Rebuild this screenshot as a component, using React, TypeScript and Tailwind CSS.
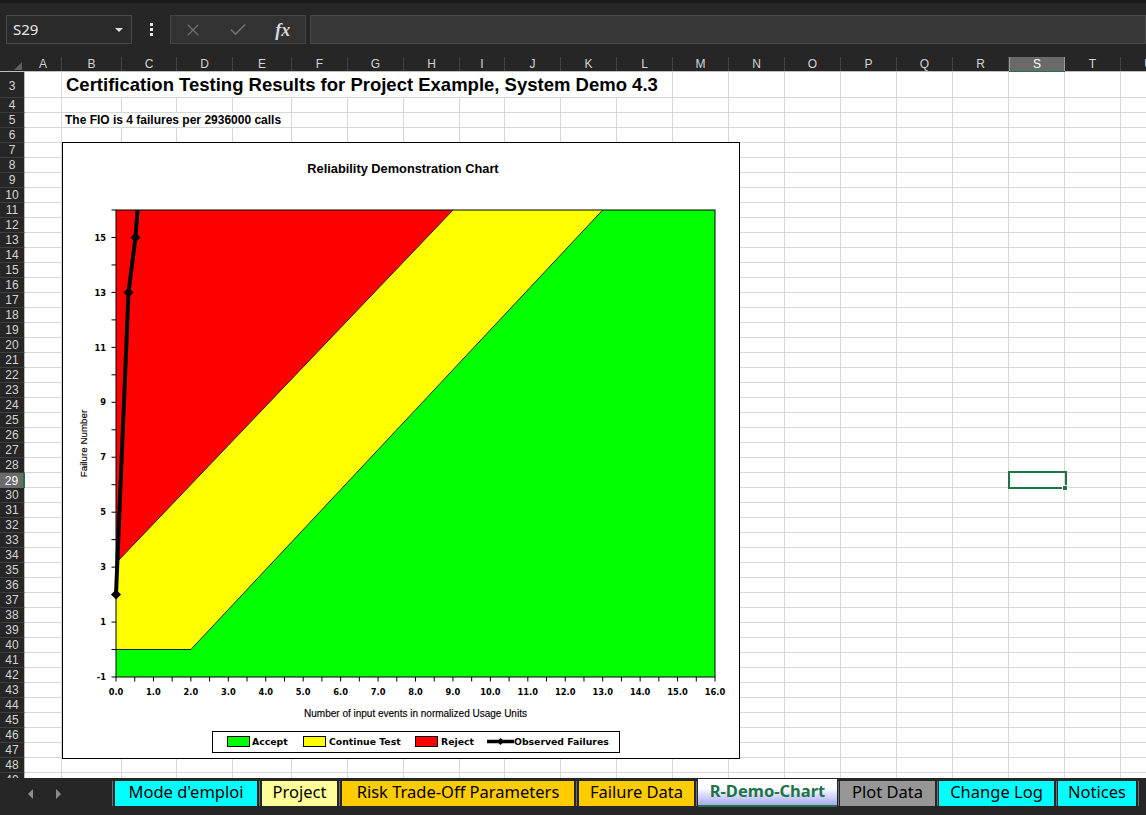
import { X, Check } from "lucide-react";

const GRID =
  "grid grid-cols-[37px_60px_55px_56px_59px_56px_56px_56px_45px_56px_56px_56px_56px_56px_56px_56px_56px_56px_56px_56px_56px]";
const COLS = ["A","B","C","D","E","F","G","H","I","J","K","L","M","N","O","P","Q","R","S","T","U"];
const ROWS: number[] = [];
for (let r = 3; r <= 49; r++) ROWS.push(r);

const px = (x: number) => 54 + x * (599 / 16);
const py = (v: number) => 535 - (v + 1) * (467 / 17);

function Diamond({ x, y, s = 5 }: { x: number; y: number; s?: number }) {
  return <polygon points={`${x},${y - s} ${x + s},${y} ${x},${y + s} ${x - s},${y}`} fill="#000" />;
}

function Chart() {
  const xt: number[] = [];
  for (let i = 0; i <= 32; i++) xt.push(i * 0.5);
  const yt: number[] = [];
  for (let v = -1; v <= 16; v++) yt.push(v);
  const axisFont = { fontFamily: "'DejaVu Sans', sans-serif", fontWeight: 700 } as const;
  const obs = [
    [54, py(2)],
    [66.5, py(13)],
    [73.5, py(15)],
    [75.5, 68],
  ];
  return (
    <svg width={678} height={617} className="block">
      <rect x={0.5} y={0.5} width={677} height={616} fill="#fff" stroke="#000" strokeWidth={1} />
      <text x={341} y={30.5} textAnchor="middle" fontFamily="'Liberation Sans', Arial, sans-serif" fontWeight={700} fontSize={12.8} fill="#000">
        Reliability Demonstration Chart
      </text>
      <polygon points={`54,507.5 128.9,507.5 540.7,68 653,68 653,535 54,535`} fill="#00ff00" />
      <polygon points={`54,421 391,68 540.7,68 128.9,507.5 54,507.5`} fill="#ffff00" />
      <polygon points={`54,68 391,68 54,421`} fill="#ff0000" />
      <polyline points={`54,421 391,68`} fill="none" stroke="#222" strokeWidth={1} />
      <polyline points={`54,507.5 128.9,507.5 540.7,68`} fill="none" stroke="#222" strokeWidth={1} />
      <polyline points={obs.map((p) => p.join(",")).join(" ")} fill="none" stroke="#000" strokeWidth={4} />
      <Diamond x={54} y={py(2)} />
      <Diamond x={66.5} y={py(13)} />
      <Diamond x={73.5} y={py(15)} />
      <rect x={54} y={68} width={599} height={467} fill="none" stroke="#000" strokeWidth={1} />
      {yt.map((v) => (
        <line key={"yt" + v} x1={49.5} x2={54} y1={py(v)} y2={py(v)} stroke="#000" strokeWidth={1} />
      ))}
      {yt
        .filter((v) => Math.abs(v % 2) === 1)
        .map((v) => (
          <text key={"yl" + v} x={44} y={py(v) + 3.2} textAnchor="end" fontSize={8.3} fill="#000" style={axisFont}>
            {v}
          </text>
        ))}
      {xt.map((x) => (
        <line key={"xt" + x} x1={px(x)} x2={px(x)} y1={535} y2={539.5} stroke="#000" strokeWidth={1} />
      ))}
      {xt
        .filter((x) => Number.isInteger(x))
        .map((x) => (
          <text key={"xl" + x} x={px(x)} y={552.5} textAnchor="middle" fontSize={8.3} fill="#000" style={axisFont}>
            {x}.0
          </text>
        ))}
      <text x={353.5} y={574.5} textAnchor="middle" fontFamily="'Liberation Sans', Arial, sans-serif" fontSize={10} fill="#000" stroke="#000" strokeWidth={0.15}>
        Number of input events in normalized Usage Units
      </text>
      <text
        x={24.5}
        y={301.5}
        textAnchor="middle"
        transform="rotate(-90 24.5 301.5)"
        fontFamily="'Liberation Sans', Arial, sans-serif"
        fontSize={9.8}
        fill="#000"
        stroke="#000"
        strokeWidth={0.15}
      >
        Failure Number
      </text>
      <rect x={150.5} y={589.5} width={407} height={21} fill="#fff" stroke="#000" strokeWidth={1} />
      <rect x={165.5} y={594.5} width={22} height={10} fill="#00ff00" stroke="#000" strokeWidth={1} />
      <text x={190} y={603} fontSize={9.3} fill="#000" style={axisFont}>Accept</text>
      <rect x={241.5} y={594.5} width={22} height={10} fill="#ffff00" stroke="#000" strokeWidth={1} />
      <text x={267} y={603} fontSize={9.3} fill="#000" style={axisFont}>Continue Test</text>
      <rect x={353.5} y={594.5} width={22} height={10} fill="#ff0000" stroke="#000" strokeWidth={1} />
      <text x={379} y={603} fontSize={9.3} fill="#000" style={axisFont}>Reject</text>
      <line x1={425} x2={452} y1={599.5} y2={599.5} stroke="#000" strokeWidth={3.5} />
      <Diamond x={438.5} y={599.5} s={3.5} />
      <text x={452} y={603} fontSize={9.3} fill="#000" style={axisFont}>Observed Failures</text>
    </svg>
  );
}

function Sep({ w }: { w: string }) {
  return (
    <div className={w + " h-[25px] flex justify-center"}>
      <div className="w-px h-full bg-[#6e6e6e]" />
    </div>
  );
}

function Tab({ label, cls }: { label: string; cls: string }) {
  return (
    <div className={cls + " h-[25px] pb-[2px] flex items-center justify-center text-[16.5px] text-black font-['Noto_Sans',sans-serif] leading-none"}>
      {label}
    </div>
  );
}

export default function App() {
  return (
    <div className="w-[1146px] h-[815px] overflow-hidden bg-[#262626] flex flex-col font-['Liberation_Sans',Arial,sans-serif]">
      <div className="h-[3px] shrink-0 bg-[#1b1b1b]" />
      <div className="h-[54px] shrink-0 flex items-start pt-[12px]">
        <div className="ml-[6px] w-[126px] h-[29px] bg-[#2a2a2a] border border-[#4a4a4a] flex items-center justify-between pl-[6px] pr-[8px] text-[#e8e8e8] text-[15px] font-['Noto_Sans',sans-serif]">
          <span>S29</span>
          <span className="w-0 h-0 border-l-[4px] border-r-[4px] border-t-[4px] border-l-transparent border-r-transparent border-t-[#e0e0e0]" />
        </div>
        <div className="w-[38px] h-[29px] flex flex-col items-center justify-center gap-[2px]">
          <div className="w-[3px] h-[3px] bg-[#e6e6e6]" />
          <div className="w-[3px] h-[3px] bg-[#e6e6e6]" />
          <div className="w-[3px] h-[3px] bg-[#e6e6e6]" />
        </div>
        <div className="w-[136px] h-[29px] bg-[#323232] border border-[#444] grid grid-cols-3 items-center justify-items-center">
          <X size={20} strokeWidth={1.4} color="#6f6f6f" />
          <Check size={20} strokeWidth={2} color="#6f6f6f" />
          <span className="text-[18px] italic font-semibold font-['Liberation_Serif',serif] text-[#d8d8d8] leading-none">fx</span>
        </div>
        <div className="ml-[4px] flex-1 h-[29px] bg-[#383838] border border-[#4a4a4a]" />
      </div>
      <div className="h-[14px] shrink-0 flex overflow-hidden">
        <div className="w-[25px] shrink-0 flex items-end justify-end pr-[3px] pb-[1px]">
          <div className="w-0 h-0 border-l-[8px] border-l-transparent border-b-[8px] border-b-[#606060]" />
        </div>
        <div className={GRID + " shrink-0"}>
          {COLS.map((c) =>
            c === "S" ? (
              <div key={c} className="bg-[#6a6a6a] border-x border-[#9a9a9a] flex items-center justify-center text-[12px] text-white leading-[12px]">
                {c}
              </div>
            ) : (
              <div key={c} className="border-r border-[#444] flex items-center justify-center text-[12px] text-[#d4d4d4] leading-[12px]">
                {c}
              </div>
            )
          )}
        </div>
      </div>
      <div className="h-px shrink-0 flex">
        <div className="w-[25px] shrink-0 bg-[#bfbfbf]" />
        <div className="w-[984px] shrink-0 bg-[#bfbfbf]" />
        <div className="w-[56px] shrink-0 bg-[#217346]" />
        <div className="flex-1 bg-[#bfbfbf]" />
      </div>
      <div className="h-[706px] shrink-0 flex overflow-hidden">
        <div className="w-[25px] shrink-0 flex flex-col">
          {ROWS.map((r) =>
            r === 29 ? (
              <div key={r} className="h-[15px] shrink-0 bg-[#6a6a6a] border-r-2 border-[#217346] flex items-center justify-center text-[12px] text-white leading-[12px]">
                {r}
              </div>
            ) : r === 3 ? (
              <div key={r} className="h-[26px] shrink-0 border-b border-[#3e3e3e] border-r border-r-[#bfbfbf] flex items-center justify-center text-[12px] text-[#d4d4d4] leading-[12px] pt-[3px]">
                {r}
              </div>
            ) : (
              <div key={r} className="h-[15px] shrink-0 border-b border-[#3e3e3e] border-r border-r-[#bfbfbf] flex items-center justify-center text-[12px] text-[#d4d4d4] leading-[12px]">
                {r}
              </div>
            )
          )}
        </div>
        <div className="relative flex-1 bg-white overflow-hidden">
          <div className="flex flex-col">
            {ROWS.map((r) => (
              <div key={r} className={r === 3 ? GRID + " h-[26px] shrink-0" : GRID + " h-[15px] shrink-0"}>
                {COLS.map((c, i) => {
                  const noRight = (r === 3 && i >= 1 && i <= 10) || (r === 5 && i >= 1 && i <= 3);
                  return (
                    <div
                      key={c}
                      className={
                        noRight
                          ? "border-b border-[#d6d6d6] flex items-center min-w-0"
                          : "border-r border-b border-[#d6d6d6] flex items-center min-w-0"
                      }
                    >
                      {r === 3 && i === 1 && (
                        <span className="pl-[4px] pt-[2px] whitespace-nowrap font-bold text-[18.5px] text-black leading-none">
                          Certification Testing Results for Project Example, System Demo 4.3
                        </span>
                      )}
                      {r === 5 && i === 1 && (
                        <span className="pl-[3px] whitespace-nowrap font-bold text-[12px] text-black leading-none">
                          The FIO is 4 failures per 2936000 calls
                        </span>
                      )}
                    </div>
                  );
                })}
              </div>
            ))}
          </div>
          <div className="absolute left-[37px] top-[70px]">
            <Chart />
          </div>
          <div className="absolute left-[983px] top-[399px] w-[59px] h-[18px] border-2 border-[#217346]" />
          <div className="absolute left-[1037px] top-[413px] w-[6px] h-[6px] bg-[#217346] border border-white" />
        </div>
      </div>
      <div className="h-[37px] shrink-0 flex items-start pt-[3px] bg-[#262626]">
        <div className="w-[112px] h-[25px] flex items-center">
          <div className="ml-[28px] w-0 h-0 border-r-[5px] border-r-[#8c8c8c] border-y-[5px] border-y-transparent" />
          <div className="ml-[23px] w-0 h-0 border-l-[5px] border-l-[#8c8c8c] border-y-[5px] border-y-transparent" />
        </div>
        <div className="w-px h-[25px] bg-[#6e6e6e]" />
        <div className="w-[2px]" />
        <Tab label="Mode d'emploi" cls="w-[142px] bg-[#00ffff]" />
        <Sep w="w-[5px]" />
        <Tab label="Project" cls="w-[75px] bg-[#ffff99]" />
        <Sep w="w-[5px]" />
        <Tab label="Risk Trade-Off Parameters" cls="w-[232px] bg-[#ffcc00]" />
        <Sep w="w-[5px]" />
        <Tab label="Failure Data" cls="w-[115px] bg-[#ffcc00]" />
        <Sep w="w-[4px]" />
        <div className="w-[139px] h-[28px] -mt-[2px] pb-[2px] bg-linear-to-b from-white from-35% to-[#a6a9f2] border-b-2 border-[#217346] flex items-center justify-center text-[16.5px] font-bold text-[#217346] font-['Noto_Sans',sans-serif] leading-none">
          R-Demo-Chart
        </div>
        <Sep w="w-[3px]" />
        <Tab label="Plot Data" cls="w-[95px] bg-[#969696]" />
        <Sep w="w-[4px]" />
        <Tab label="Change Log" cls="w-[115px] bg-[#00ffff]" />
        <Sep w="w-[4px]" />
        <Tab label="Notices" cls="w-[78px] bg-[#00ffff]" />
        <Sep w="w-[4px]" />
      </div>
    </div>
  );
}
